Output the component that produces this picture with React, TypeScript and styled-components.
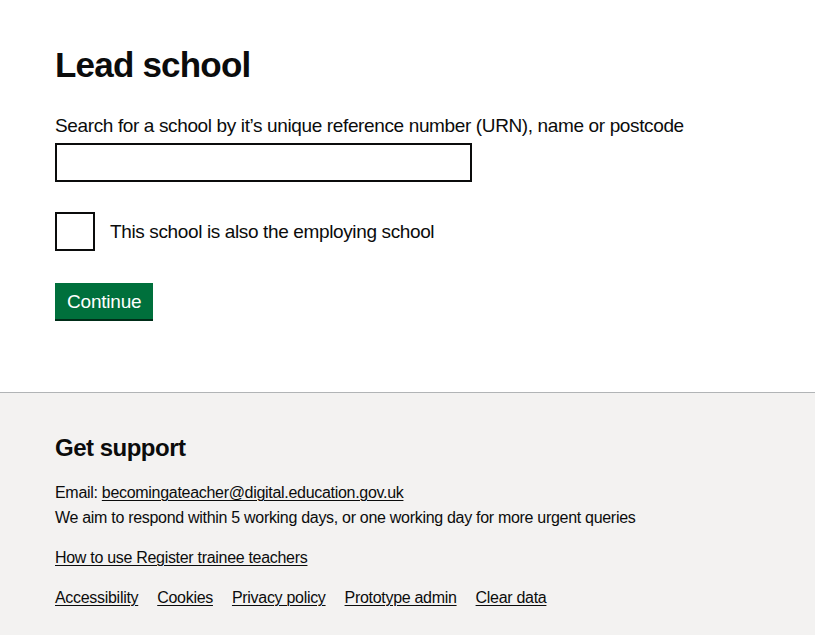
import React from "react";
import styled, { createGlobalStyle } from "styled-components";

const Global = createGlobalStyle`
  html, body { margin: 0; padding: 0; background: #fff; }
  body { font-family: "Liberation Sans", Arial, sans-serif; color: #0b0c0c; }
  * { box-sizing: border-box; }
`;

const Page = styled.div`
  min-height: 635px;
  display: flex;
  flex-direction: column;
`;

const Main = styled.main`
  padding: 40px 55px 73px;
`;

const Heading = styled.h1`
  margin: 0 0 23px;
  font-size: 35px;
  line-height: 50px;
  font-weight: 700;
  letter-spacing: -0.8px;
`;

const Field = styled.div`
  margin-bottom: 30px;
`;

const Label = styled.label`
  display: block;
  font-size: 19px;
  line-height: 25px;
  letter-spacing: -0.37px;
  margin-bottom: 5px;
`;

const Input = styled.input`
  display: block;
  width: 417px;
  height: 39px;
  border: 2px solid #0b0c0c;
  border-radius: 0;
  padding: 5px;
  font-size: 19px;
  font-family: inherit;
`;

const CheckRow = styled.div`
  display: flex;
  align-items: center;
  gap: 15px;
  margin-bottom: 32px;
`;

const CheckBox = styled.span`
  width: 40px;
  height: 39px;
  border: 2px solid #0b0c0c;
  background: #fff;
  flex: none;
`;

const CheckLabel = styled.span`
  font-size: 19px;
  line-height: 25px;
  letter-spacing: -0.37px;
`;

const Button = styled.button`
  display: inline-block;
  background: #00703c;
  color: #fff;
  border: 0;
  border-radius: 0;
  box-shadow: 0 2px 0 #002d18;
  font-family: inherit;
  font-size: 19px;
  line-height: 19px;
  letter-spacing: -0.2px;
  padding: 9px 12px 8px;
  height: 36px;
  width: 98px;
`;

const Footer = styled.footer`
  flex: 1;
  background: #f3f2f1;
  border-top: 1px solid #b1b4b6;
  padding: 40px 55px 25px;
`;

const FooterHeading = styled.h2`
  margin: 0 0 17px;
  font-size: 24px;
  line-height: 30px;
  font-weight: 700;
  letter-spacing: -0.5px;
`;

const Text = styled.p`
  margin: 0;
  font-size: 16px;
  line-height: 25px;
  letter-spacing: -0.3px;
`;

const FooterLink = styled.a`
  color: #0b0c0c;
  text-decoration: underline;
  text-underline-offset: 2px;
  text-decoration-thickness: 1px;
`;

const Block = styled.div<{ $mt?: number }>`
  margin-top: ${(p) => p.$mt ?? 0}px;
  font-size: 16px;
  line-height: 25px;
  letter-spacing: -0.3px;
`;

const LinkList = styled.ul`
  list-style: none;
  margin: 15px 0 0;
  padding: 0;
  display: flex;
  gap: 19px;
  font-size: 16px;
  line-height: 25px;
  letter-spacing: -0.3px;
`;

export default function App() {
  return (
    <Page>
      <Global />
      <Main>
        <Heading>Lead school</Heading>
        <Field>
          <Label htmlFor="school">
            Search for a school by it’s unique reference number (URN), name or postcode
          </Label>
          <Input id="school" type="text" />
        </Field>
        <CheckRow>
          <CheckBox />
          <CheckLabel>This school is also the employing school</CheckLabel>
        </CheckRow>
        <Button>Continue</Button>
      </Main>
      <Footer>
        <FooterHeading>Get support</FooterHeading>
        <Text>
          Email: <FooterLink href="#">becomingateacher@digital.education.gov.uk</FooterLink>
        </Text>
        <Text>We aim to respond within 5 working days, or one working day for more urgent queries</Text>
        <Block $mt={15}>
          <FooterLink href="#">How to use Register trainee teachers</FooterLink>
        </Block>
        <LinkList>
          <li><FooterLink href="#">Accessibility</FooterLink></li>
          <li><FooterLink href="#">Cookies</FooterLink></li>
          <li><FooterLink href="#">Privacy policy</FooterLink></li>
          <li><FooterLink href="#">Prototype admin</FooterLink></li>
          <li><FooterLink href="#">Clear data</FooterLink></li>
        </LinkList>
      </Footer>
    </Page>
  );
}
